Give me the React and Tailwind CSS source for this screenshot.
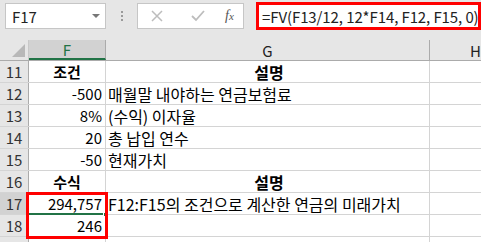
import React from "react";

const rows = [
  { n: 11, f: "조건", g: "설명", head: true },
  { n: 12, f: "-500", g: "매월말 내야하는 연금보험료" },
  { n: 13, f: "8%", g: "(수익) 이자율" },
  { n: 14, f: "20", g: "총 납입 연수" },
  { n: 15, f: "-50", g: "현재가치" },
  { n: 16, f: "수식", g: "설명", head: true },
  { n: 17, f: "294,757", g: "F12:F15의 조건으로 계산한 연금의 미래가치", active: true },
  { n: 18, f: "246", g: "" },
  { n: "", f: "", g: "" },
];

const font = { fontFamily: '"Noto Sans CJK KR", "Noto Sans", sans-serif' };

export default function App() {
  return (
    <div className="w-[481px] h-[242px] overflow-hidden bg-white relative text-black" style={font}>
      {/* toolbar */}
      <div className="h-[40px] bg-[#e6e6e6] flex items-start pt-[3px]">
        <div className="ml-[5px] w-[101px] h-[26px] bg-white border border-[#c6c6c6] flex items-center justify-between pl-[6px] pr-[5px]">
          <span className="text-[15px] leading-none text-[#222]">F17</span>
          <svg width="8" height="5" viewBox="0 0 8 5"><path d="M0 0 L8 0 L4 4 Z" fill="#777" /></svg>
        </div>
        <div className="w-[31px] h-[26px] flex flex-col items-center justify-center gap-[2px]">
          <div className="w-[2px] h-[2px] bg-[#9a9a9a]" />
          <div className="w-[2px] h-[2px] bg-[#9a9a9a]" />
          <div className="w-[2px] h-[2px] bg-[#9a9a9a]" />
        </div>
        <div className="w-[107px] h-[26px] bg-white border border-[#c6c6c6] flex items-center">
          <svg className="ml-[13px]" width="12" height="12" viewBox="0 0 12 12"><path d="M1 1 L11 11 M11 1 L1 11" stroke="#bdbdbd" strokeWidth="1.5" /></svg>
          <svg className="ml-[28px]" width="14" height="12" viewBox="0 0 14 12"><path d="M1 6 L5 10 L13 1" stroke="#bdbdbd" strokeWidth="1.8" fill="none" /></svg>
          <span className="ml-[20px] text-[14px] italic text-[#555] leading-none" style={{ fontFamily: '"Liberation Serif", serif' }}>f<span className="text-[11px]">x</span></span>
        </div>
        <div className="ml-[12px] w-[225px] h-[28px] -mt-[1px] bg-white border-[3px] border-[#ff0000] flex items-center pl-[3px] overflow-hidden">
          <span className="text-[15px] leading-none text-[#222] whitespace-nowrap tracking-[-0.1px]">=FV(F13/12, 12*F14, F12, F15, 0)</span>
        </div>
      </div>
      {/* column headers */}
      <div className="flex h-[21px] bg-[#e6e6e6] border-b border-[#ababab]">
        <div className="w-[29px] h-full relative border-r border-[#c8c8c8]">
          <svg className="absolute right-[3px] bottom-[3px]" width="13" height="13" viewBox="0 0 13 13"><path d="M13 0 L13 13 L0 13 Z" fill="#b8b8b8" /></svg>
        </div>
        <div className="w-[77px] h-full bg-[#d2d2d2] border-r border-[#ababab] border-b-2 border-b-[#217346] flex items-center justify-center text-[15px] text-[#217346] leading-none">F</div>
        <div className="w-[324px] h-full border-r border-[#ababab] flex items-center justify-center text-[15px] text-[#222] leading-none">G</div>
        <div className="flex-1 h-full flex items-center justify-center text-[15px] text-[#222] leading-none pl-[40px]">H</div>
      </div>
      {/* grid */}
      {rows.map((r, i) => (
        <div key={i} className="flex h-[22px] border-b border-[#d4d4d4]">
          <div className={`w-[29px] h-full border-r border-[#ababab] flex items-center justify-center text-[15px] text-[#333] leading-none ${r.active ? "bg-[#d2d2d2]" : "bg-[#e6e6e6]"}`}>{r.n}</div>
          <div className={`w-[77px] h-full border-r border-[#d4d4d4] flex items-center text-[15px] leading-none whitespace-nowrap ${r.head ? "justify-center font-bold" : "justify-end pr-[3px]"}`}>{r.f}</div>
          <div className={`w-[324px] h-full border-r border-[#d4d4d4] flex items-center text-[16px] leading-none whitespace-nowrap ${r.head ? "justify-start pl-[13px] font-bold text-[15px]" : "pl-[2px]"}`}>
            {r.head ? <span className="w-[300px] text-center">{r.g}</span> : r.g}
          </div>
          <div className="flex-1 h-full" />
        </div>
      ))}
      {/* active cell border */}
      <div className="absolute left-[28px] top-[192px] w-[78px] h-[23px] border-b-2 border-[#217346]" />
      <div className="absolute left-[103px] top-[212px] w-[5px] h-[5px] bg-[#217346] border border-white" />
      {/* red highlight */}
      <div className="absolute left-[26px] top-[192px] w-[82px] h-[47px] border-[3px] border-[#ff0000]" />
    </div>
  );
}
